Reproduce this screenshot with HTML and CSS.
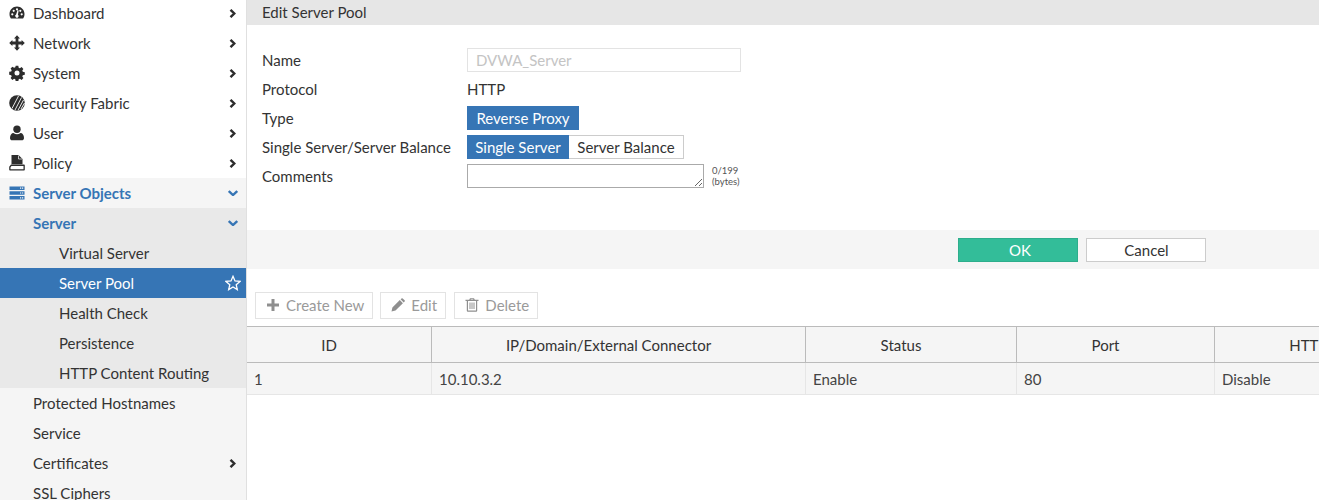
FILE: index.html
```html
<!DOCTYPE html>
<html lang="en">

<head>
    <meta charset="UTF-8">
    <title>Edit Server Pool</title>
    <link rel="stylesheet" href="styles.css">
</head>

<body>
    <nav class="sidebar">
        <ul class="nav-list">
            <li class="nav-item">
                <svg class="nav-icon" viewBox="0 0 16 16"><path fill-rule="evenodd" d="M8 1.500C3.800 1.500.5 4.800.5 9c0 1.700.5 3.200 1.400 4.500h12.200c.9-1.300 1.400-2.800 1.400-4.500 0-4.200-3.300-7.500-7.500-7.500zM8 3.200a1.100 1.100 0 1 1 0 2.200 1.100 1.100 0 0 1 0-2.200zM3.300 8.200a1.100 1.100 0 1 1 0 2.200 1.100 1.100 0 0 1 0-2.200zM12.700 8.200a1.100 1.100 0 1 1 0 2.200 1.100 1.100 0 0 1 0-2.200zM4.700 4.700a1.100 1.100 0 1 1 0 2.200 1.100 1.100 0 0 1 0-2.200zM11.300 4.700a1.100 1.100 0 1 1 0 2.200 1.100 1.100 0 0 1 0-2.200zM9.700 5.500 8.900 9.700a1.700 1.700 0 1 1-1.800-.1L8.500 5.200z"/></svg>
                <span>Dashboard</span>
                <svg class="chevron" viewBox="0 0 7 9"><path d="M1.500 .8 5.300 4.500 1.500 8.200" /></svg>
            </li>
            <li class="nav-item">
                <svg class="nav-icon" viewBox="0 0 16 16"><path d="M8 .2 11 3.400H9.400V6.600H12.600V5L15.800 8 12.600 11V9.400H9.400V12.600H11L8 15.800 5 12.600H6.600V9.400H3.400V11L.2 8 3.400 5V6.600H6.600V3.400H5z"/></svg>
                <span>Network</span>
                <svg class="chevron" viewBox="0 0 7 9"><path d="M1.500 .8 5.300 4.500 1.500 8.200" /></svg>
            </li>
            <li class="nav-item">
                <svg class="nav-icon" viewBox="0 0 16 16"><path fill-rule="evenodd" d="M6.700.7h2.600l.4 2 1.200.5 1.700-1.100 1.800 1.800-1.100 1.700.5 1.200 2 .4v2.600l-2 .4-.5 1.200 1.100 1.700-1.800 1.800-1.700-1.100-1.200.5-.4 2H6.700l-.4-2-1.200-.5-1.700 1.100-1.800-1.800 1.100-1.700-.5-1.200-2-.4V6.800l2-.4.5-1.200-1.100-1.700 1.800-1.800 1.700 1.100 1.200-.5zM8 5.500a2.500 2.500 0 1 0 0 5 2.500 2.500 0 0 0 0-5z"/></svg>
                <span>System</span>
                <svg class="chevron" viewBox="0 0 7 9"><path d="M1.500 .8 5.300 4.500 1.500 8.200" /></svg>
            </li>
            <li class="nav-item">
                <svg class="nav-icon" viewBox="0 0 16 16"><circle cx="8" cy="8" r="7.800"/><path d="M3 13.500 9.500 1M6 15 12.500 2.500M9 15.200 14.500 5M12 14 15.500 8" stroke="#fff" stroke-width=".9" fill="none"/></svg>
                <span>Security Fabric</span>
                <svg class="chevron" viewBox="0 0 7 9"><path d="M1.500 .8 5.300 4.500 1.500 8.200" /></svg>
            </li>
            <li class="nav-item">
                <svg class="nav-icon" viewBox="0 0 16 16"><circle cx="8" cy="4.300" r="3.700"/><path d="M1 13c0-3 1.500-5 3.500-5 1 .8 2.200 1.200 3.500 1.200S10.500 8.800 11.500 8c2 0 3.500 2 3.500 5 0 1.500-1 2.300-2.200 2.300H3.200C2 15.300 1 14.500 1 13z"/></svg>
                <span>User</span>
                <svg class="chevron" viewBox="0 0 7 9"><path d="M1.500 .8 5.300 4.500 1.500 8.200" /></svg>
            </li>
            <li class="nav-item">
                <svg class="nav-icon" viewBox="0 0 16 16"><path d="M2.500 0H9.500L13.500 4V9.300H2.500z"/><path d="M9.500 .5V4H13" fill="none" stroke="#fff" stroke-width=".7"/><path fill-rule="evenodd" d="M2 9.500h13a.8.8 0 0 1 .8.8v4.400a.8.800 0 0 1-.8.8H1a.8.800 0 0 1-.8-.8v-2.900zM2.500 11 1.500 12.300v1.900h13V11z"/></svg>
                <span>Policy</span>
                <svg class="chevron" viewBox="0 0 7 9"><path d="M1.500 .8 5.300 4.500 1.500 8.200" /></svg>
            </li>
            <li class="nav-item nav-open">
                <svg class="nav-icon" viewBox="0 0 16 16"><path fill-rule="evenodd" d="M.5 1.500h15v3.500H.5zM.5 6.200h15v3.600H.5zM.5 11h15v3.500H.5zM11 2.600v1.200h1.200V2.600zM13 2.600v1.200h1.200V2.600zM11 7.400v1.200h1.200V7.400zM13 7.400v1.200h1.200V7.400zM11 12.200v1.200h1.200v-1.200zM13 12.200v1.200h1.200v-1.200z"/></svg>
                <span>Server Objects</span>
                <svg class="chevron chevron-down" viewBox="0 0 10 6"><path d="M.8 1 5 5 9.200 1" /></svg>
            </li>
            <li class="nav-item sub nav-open">
                <span>Server</span>
                <svg class="chevron chevron-down" viewBox="0 0 10 6"><path d="M.8 1 5 5 9.200 1" /></svg>
            </li>
            <li class="nav-item sub deep">Virtual Server</li>
            <li class="nav-item deep active">
                <span>Server Pool</span>
                <svg class="star" viewBox="0 0 16 16"><path d="M8 1.300 10 5.900l5 .5-3.800 3.300 1.100 4.900L8 12l-4.300 2.600 1.100-4.900L1 6.400l5-.5z"/></svg>
            </li>
            <li class="nav-item sub deep">Health Check</li>
            <li class="nav-item sub deep">Persistence</li>
            <li class="nav-item sub deep">HTTP Content Routing</li>
            <li class="nav-item plain">Protected Hostnames</li>
            <li class="nav-item plain">Service</li>
            <li class="nav-item plain">
                <span>Certificates</span>
                <svg class="chevron" viewBox="0 0 7 9"><path d="M1.500 .8 5.300 4.500 1.500 8.200" /></svg>
            </li>
            <li class="nav-item plain">SSL Ciphers</li>
        </ul>
    </nav>

    <main class="content">
        <div class="page-title">Edit Server Pool</div>

        <form class="pool-form">
            <div class="form-row">
                <label>Name</label>
                <input class="name-input" type="text" value="DVWA_Server" disabled>
            </div>
            <div class="form-row">
                <label>Protocol</label>
                <span>HTTP</span>
            </div>
            <div class="form-row">
                <label>Type</label>
                <span class="toggle on toggle-proxy">Reverse Proxy</span>
            </div>
            <div class="form-row">
                <label>Single Server/Server Balance</label>
                <span class="toggle on toggle-single">Single Server</span><span class="toggle toggle-balance">Server Balance</span>
            </div>
            <div class="form-row">
                <label>Comments</label>
                <textarea class="comments"></textarea>
                <span class="counter">0/199<br>(bytes)</span>
            </div>
        </form>

        <div class="form-footer">
            <button class="btn-ok" type="button">OK</button>
            <button class="btn-cancel" type="button">Cancel</button>
        </div>

        <div class="toolbar">
            <span class="tool tool-create">
                <svg viewBox="0 0 14 14"><path d="M5.500 1h3v4.500H13v3H8.500V13h-3V8.500H1v-3h4.500z"/></svg>
                Create New
            </span>
            <span class="tool tool-edit">
                <svg viewBox="0 0 14 14"><path d="M.5 13.500l.9-4 7.400-7.400 3.100 3.100-7.400 7.400zM9.600 1.300l.9-.9a.9.9 0 0 1 1.200 0l1.900 1.900a.9.900 0 0 1 0 1.200l-.9.9z"/></svg>
                Edit
            </span>
            <span class="tool tool-delete">
                <svg viewBox="0 0 14 14"><path fill-rule="evenodd" d="M5 .3h4l.8 1.500H13.500v1.200h-1.300v9.700a1 1 0 0 1-1 1H2.800a1 1 0 0 1-1-1V3H.5V1.800h3.700zM5.600 1.800h2.800l-.3-.5H5.900zM3 3v9.500h8V3zM4.500 4.500h1v6.500h-1zM6.500 4.500h1v6.500h-1zM8.500 4.500h1v6.500h-1z"/></svg>
                Delete
            </span>
        </div>

        <div class="table-wrap">
            <table class="pool-table">
                <thead>
                    <tr>
                        <th class="col-id">ID</th>
                        <th class="col-ip">IP/Domain/External Connector</th>
                        <th class="col-status">Status</th>
                        <th class="col-port">Port</th>
                        <th class="col-http">HTTP Health Check</th>
                    </tr>
                </thead>
                <tbody>
                    <tr>
                        <td>1</td>
                        <td>10.10.3.2</td>
                        <td>Enable</td>
                        <td>80</td>
                        <td>Disable</td>
                    </tr>
                </tbody>
            </table>
        </div>
    </main>
</body>

</html>
```

FILE: styles.css
```css
/* General Body Styling */
body {
    font-family: 'Lato', sans-serif;
    font-size: 15px;
    color: #333;
    background: #fff;
    margin: 0;
    height: 500px;
    display: flex;
    overflow: hidden;
}

/* Sidebar */
.sidebar {
    width: 246px;
    flex-shrink: 0;
    height: 500px;
    overflow: hidden;
    border-right: 1px solid #e0e0e0;
    background: #f5f5f5;
}

.nav-list {
    list-style: none;
    margin: -2px 0 0;
    padding: 0;
}

.nav-item {
    height: 30px;
    display: flex;
    align-items: center;
    padding-left: 33px;
    padding-right: 10px;
    position: relative;
    background: #fff;
    color: #333;
}

.nav-icon {
    position: absolute;
    left: 9px;
    top: 7px;
    width: 16px;
    height: 16px;
    fill: #2d2d2d;
}

.chevron {
    position: absolute;
    right: 10px;
    top: 11px;
    width: 7px;
    height: 9px;
    fill: none;
    stroke: #2d2d2d;
    stroke-width: 2.4;
}

.chevron-down {
    right: 8px;
    top: 12px;
    width: 10px;
    height: 6px;
    stroke: #3675b5;
}

.nav-open {
    background: #f5f5f5;
    color: #3675b5;
    font-weight: 700;
}

.nav-open .nav-icon {
    fill: #3675b5;
}

.sub {
    background: #e9e9e9;
}

.deep {
    padding-left: 59px;
}

.plain {
    background: #f5f5f5;
}

.active {
    background: #3675b5;
    color: #fff;
}

.star {
    position: absolute;
    right: 5px;
    top: 7px;
    width: 16px;
    height: 16px;
    fill: none;
    stroke: #fff;
    stroke-width: 1.3;
}

/* Main panel */
.content {
    flex: 1;
    min-width: 0;
    display: flex;
    flex-direction: column;
}

.page-title {
    height: 25px;
    line-height: 25px;
    padding-left: 15px;
    background: #e6e6e6;
}

/* Form */
.pool-form {
    height: 205px;
    box-sizing: border-box;
    padding: 23px 0 0 15px;
}

.form-row {
    display: flex;
    align-items: center;
    height: 24px;
    margin-bottom: 5px;
}

.form-row label {
    width: 205px;
    flex-shrink: 0;
    white-space: nowrap;
}

.name-input {
    width: 274px;
    height: 24px;
    box-sizing: border-box;
    border: 1px solid #e3e3e3;
    padding: 0 8px;
    font: inherit;
    color: #c4c4c4;
    background: #fff;
}

.toggle {
    height: 24px;
    line-height: 22px;
    box-sizing: border-box;
    text-align: center;
    white-space: nowrap;
    border: 1px solid #ccc;
    border-left: none;
}

.toggle.on {
    background: #3675b5;
    border: 1px solid #3675b5;
    color: #fff;
}

.toggle-proxy {
    width: 112px;
}

.toggle-single {
    width: 102px;
}

.toggle-balance {
    width: 115px;
}

.comments {
    width: 237px;
    height: 24px;
    box-sizing: border-box;
    border: 1px solid #aaa;
    margin: 0;
    padding: 0;
}

.counter {
    margin-left: 8px;
    font-size: 9.5px;
    line-height: 11px;
    color: #555;
}

/* Footer */
.form-footer {
    height: 39px;
    display: flex;
    align-items: center;
    gap: 8px;
    padding-left: 711px;
    background: #f5f5f5;
}

.form-footer button {
    width: 120px;
    height: 24px;
    box-sizing: border-box;
    font: inherit;
    padding: 0;
}

.form-footer .btn-ok {
    background: #33bd99;
    border: 1px solid #2eae8c;
    color: #fff;
    padding-left: 4px;
}

.form-footer .btn-cancel {
    background: #fff;
    border: 1px solid #ccc;
    color: #333;
    padding-left: 1px;
}

/* Toolbar */
.toolbar {
    display: flex;
    gap: 7px;
    padding: 23px 0 7px 8px;
}

.tool {
    height: 27px;
    box-sizing: border-box;
    display: flex;
    align-items: center;
    gap: 6px;
    padding: 0 8px 2px 10px;
    border: 1px solid #e3e3e3;
    color: #9a9a9a;
}

.tool svg {
    width: 14px;
    height: 14px;
    fill: #8f8f8f;
}

.tool-edit {
    width: 66px;
}

.tool-delete {
    margin-left: 1px;
}

/* Table */
.table-wrap {
    overflow: hidden;
}

.pool-table {
    border-collapse: separate;
    border-spacing: 0;
    table-layout: fixed;
    width: 1268px;
}

.pool-table th,
.pool-table td {
    box-sizing: border-box;
    background: #f5f5f5;
}

.pool-table th {
    height: 37px;
    padding: 0 20px 0 0;
    font-weight: 400;
    border-top: 1px solid #bbb;
    border-right: 1px solid #bbb;
    border-bottom: 1px solid #bbb;
    white-space: nowrap;
}

.pool-table td {
    height: 32px;
    padding: 0 7px;
    border-right: 1px solid #e6e6e6;
    border-bottom: 1px solid #e6e6e6;
    color: #444;
}

.col-id { width: 185px; }
.col-ip { width: 374px; }
.col-status { width: 211px; }
.col-port { width: 198px; }
.col-http { width: 300px; }
```
